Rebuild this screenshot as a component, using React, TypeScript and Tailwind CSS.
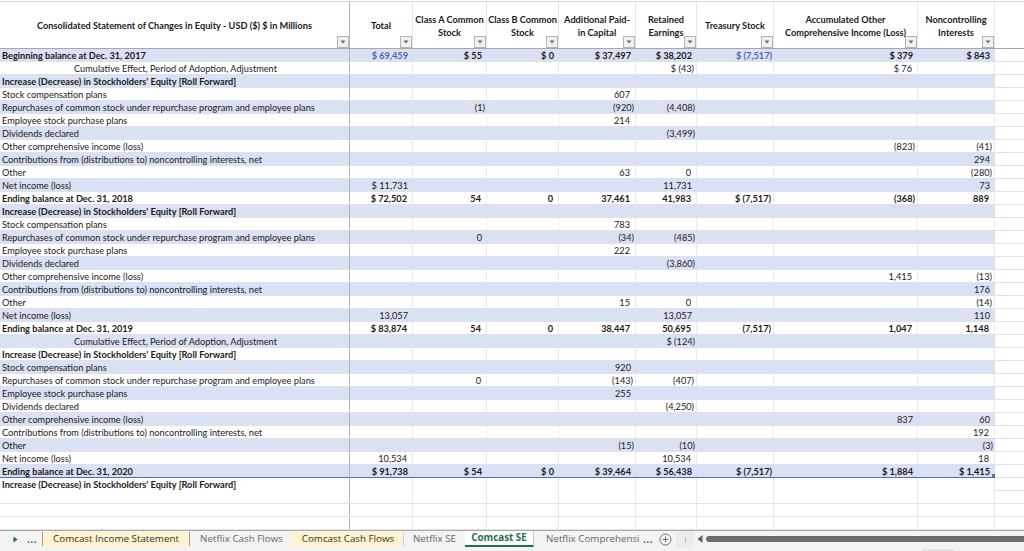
import React from 'react';

type RowData = { label: string; bold?: boolean; center?: boolean; vals?: string[] };

const INCREASE = "Increase (Decrease) in Stockholders' Equity [Roll Forward]";
const CUMULATIVE = 'Cumulative Effect, Period of Adoption, Adjustment';
const STOCK = 'Stock compensation plans';
const REPURCHASES = 'Repurchases of common stock under repurchase program and employee plans';
const EMPLOYEE = 'Employee stock purchase plans';
const DIVIDENDS = 'Dividends declared';
const OCI = 'Other comprehensive income (loss)';
const CONTRIBUTIONS = 'Contributions from (distributions to) noncontrolling interests, net';

// total, class a, class b, apic, retained, treasury, aoci, nci
const ROWS: RowData[] = [
  { label: 'Beginning balance at Dec. 31, 2017', bold: true, vals: ['$ 69,459', '$ 55', '$ 0', '$ 37,497', '$ 38,202', '$ (7,517)', '$ 379', '$ 843'] },
  { label: CUMULATIVE, center: true, vals: ['', '', '', '', '$ (43)', '', '$ 76', ''] },
  { label: INCREASE, bold: true },
  { label: STOCK, vals: ['', '', '', '607', '', '', '', ''] },
  { label: REPURCHASES, vals: ['', '(1)', '', '(920)', '(4,408)', '', '', ''] },
  { label: EMPLOYEE, vals: ['', '', '', '214', '', '', '', ''] },
  { label: DIVIDENDS, vals: ['', '', '', '', '(3,499)', '', '', ''] },
  { label: OCI, vals: ['', '', '', '', '', '', '(823)', '(41)'] },
  { label: CONTRIBUTIONS, vals: ['', '', '', '', '', '', '', '294'] },
  { label: 'Other', vals: ['', '', '', '63', '0', '', '', '(280)'] },
  { label: 'Net income (loss)', vals: ['$ 11,731', '', '', '', '11,731', '', '', '73'] },
  { label: 'Ending balance at Dec. 31, 2018', bold: true, vals: ['$ 72,502', '54', '0', '37,461', '41,983', '$ (7,517)', '(368)', '889'] },
  { label: INCREASE, bold: true },
  { label: STOCK, vals: ['', '', '', '783', '', '', '', ''] },
  { label: REPURCHASES, vals: ['', '0', '', '(34)', '(485)', '', '', ''] },
  { label: EMPLOYEE, vals: ['', '', '', '222', '', '', '', ''] },
  { label: DIVIDENDS, vals: ['', '', '', '', '(3,860)', '', '', ''] },
  { label: OCI, vals: ['', '', '', '', '', '', '1,415', '(13)'] },
  { label: CONTRIBUTIONS, vals: ['', '', '', '', '', '', '', '176'] },
  { label: 'Other', vals: ['', '', '', '15', '0', '', '', '(14)'] },
  { label: 'Net income (loss)', vals: ['13,057', '', '', '', '13,057', '', '', '110'] },
  { label: 'Ending balance at Dec. 31, 2019', bold: true, vals: ['$ 83,874', '54', '0', '38,447', '50,695', '(7,517)', '1,047', '1,148'] },
  { label: CUMULATIVE, center: true, vals: ['', '', '', '', '$ (124)', '', '', ''] },
  { label: INCREASE, bold: true },
  { label: STOCK, vals: ['', '', '', '920', '', '', '', ''] },
  { label: REPURCHASES, vals: ['', '0', '', '(143)', '(407)', '', '', ''] },
  { label: EMPLOYEE, vals: ['', '', '', '255', '', '', '', ''] },
  { label: DIVIDENDS, vals: ['', '', '', '', '(4,250)', '', '', ''] },
  { label: OCI, vals: ['', '', '', '', '', '', '837', '60'] },
  { label: CONTRIBUTIONS, vals: ['', '', '', '', '', '', '', '192'] },
  { label: 'Other', vals: ['', '', '', '(15)', '(10)', '', '', '(3)'] },
  { label: 'Net income (loss)', vals: ['10,534', '', '', '', '10,534', '', '', '18'] },
  { label: 'Ending balance at Dec. 31, 2020', bold: true, vals: ['$ 91,738', '$ 54', '$ 0', '$ 39,464', '$ 56,438', '$ (7,517)', '$ 1,884', '$ 1,415'] },
  { label: INCREASE, bold: true },
];

const HEADERS: string[][] = [
  ['Total'],
  ['Class A Common', 'Stock'],
  ['Class B Common', 'Stock'],
  ['Additional Paid-', 'in Capital'],
  ['Retained', 'Earnings'],
  ['Treasury Stock'],
  ['Accumulated Other', 'Comprehensive Income (Loss)'],
  ['Noncontrolling', 'Interests'],
];

const COLS = 'grid grid-cols-[350px_63px_74px_72px_77px_61px_77px_144px_77px]';
const FONT = "font-['Lato','Liberation_Sans',sans-serif]";

const FilterButton = () => (
  <div className="absolute right-0 bottom-0 flex h-3 w-3 items-center justify-center border border-[#b5b5b5] bg-[#f0f0f0]">
    <svg width="6" height="4" viewBox="0 0 6 4">
      <path d="M0.5 0.5h5L3 3.5z" fill="#6a6a6a" />
    </svg>
  </div>
);

const HeaderRow = () => (
  <div className="mt-px flex h-[48px] shrink-0 border-t border-b border-t-[#d8d8d8] border-b-[#a8a8a8]">
    <div className={`${COLS} w-[995px] shrink-0`}>
      <div className="relative flex items-center justify-center border-r border-[#b4b4b4] pt-px text-[9.2px] leading-[13px] font-bold text-[#1a1a1a]">
        Consolidated Statement of Changes in Equity - USD ($) $ in Millions
        <FilterButton />
      </div>
      {HEADERS.map((lines, i) => (
        <div key={i} className="relative flex flex-col items-center justify-center whitespace-nowrap border-r border-[#e6e6e6] pt-px text-center text-[9.2px] leading-[13px] font-bold text-[#1a1a1a]">
          {lines.map((l) => (
            <span key={l}>{l}</span>
          ))}
          <FilterButton />
        </div>
      ))}
    </div>
    <div className="flex-1" />
  </div>
);

const Row = ({ row, index }: { row: RowData; index: number }) => {
  const shaded = index % 2 === 0;
  const last = index === 32;
  const vals = row.vals ?? ['', '', '', '', '', '', '', ''];
  return (
    <div className="flex h-[13px] shrink-0">
      <div
        className={`${COLS} relative w-[995px] shrink-0 ${shaded ? 'bg-[#d9e1f2]' : 'bg-white'} ${
          shaded && index > 0 ? 'shadow-[0_-1px_0_#d9e1f2]' : ''
        } ${last ? 'border-b border-[#4472c4]' : ''}`}
      >
        <div
          className={`overflow-hidden whitespace-nowrap border-r border-[#b4b4b4] pl-[2px] text-[9.2px] leading-[13px] text-[#1a1a1a] ${
            row.bold ? 'font-bold' : ''
          } ${row.center ? 'text-center' : ''}`}
        >
          {row.label}
        </div>
        {vals.map((v, i) => (
          <div
            key={i}
            className={`whitespace-nowrap text-right text-[9.2px] leading-[13px] ${
              v.endsWith(')') ? 'pr-[2px]' : 'pr-[5px]'
            } ${row.bold ? 'font-bold' : ''} ${
              index === 0 && (i === 0 || i === 5) ? 'text-[#4a67ad]' : 'text-[#1a1a1a]'
            } ${shaded ? '' : 'border-r border-[#e8e8e8]'}`}
          >
            {v}
          </div>
        ))}
        {last && <div className="absolute right-0 bottom-0 h-[3px] w-[3px] bg-[#4472c4]" />}
      </div>
      <div className="flex-1 border-b border-[#e2e2e2]" />
    </div>
  );
};

const BlankRow = () => (
  <div className="flex h-[13px] shrink-0 border-b border-[#e2e2e2]">
    <div className={`${COLS} w-[995px] shrink-0`}>
      <div className="border-r border-[#b4b4b4]" />
      {HEADERS.map((_, i) => (
        <div key={i} className="border-r border-[#e8e8e8]" />
      ))}
    </div>
  </div>
);

const TabBar = () => (
  <div className="relative flex h-[21px] shrink-0 items-start border-t border-[#a8a8a8] bg-[#f3f3f3] pt-px font-['Open_Sans',sans-serif] text-[9.8px] leading-[14px]">
    <div className="flex h-[14px] w-[43px] shrink-0 items-center border-r border-[#9a9a9a]">
      <svg className="ml-[13px]" width="5" height="7" viewBox="0 0 5 7">
        <path d="M0.5 0.5L4.5 3.5L0.5 6.5z" fill="#217346" />
      </svg>
      <span className="ml-[9px] text-[10px] font-bold tracking-[0.5px] text-[#217346]">...</span>
    </div>
    <div className="flex h-[14px] w-[146px] shrink-0 items-center justify-center bg-[#fff2cc] text-[#333]">Comcast Income Statement</div>
    <div className="h-[14px] w-px shrink-0 bg-[#9a9a9a]" />
    <div className="flex h-[14px] w-[103px] shrink-0 items-center justify-center text-[#666]">Netflix Cash Flows</div>
    <div className="flex h-[14px] w-[110px] shrink-0 items-center justify-center bg-[#fff2cc] text-[#333]">Comcast Cash Flows</div>
    <div className="h-[14px] w-px shrink-0 bg-[#d0d0d0]" />
    <div className="flex h-[14px] w-[61px] shrink-0 items-center justify-center text-[#666]">Netflix SE</div>
    <div className="-mt-px flex h-[16px] w-[69px] shrink-0 items-center justify-center border-r border-b-2 border-r-[#c8c8c8] border-b-[#217346] bg-white font-bold text-[#217346]">Comcast SE</div>
    <div className="flex h-[14px] w-[107px] shrink-0 items-center pl-[12px] whitespace-nowrap text-[#666]">Netflix Comprehensi</div>
    <span className="ml-[2px] text-[10px] font-bold tracking-[0.5px] text-[#217346]">...</span>
    <svg className="mt-[1px] ml-[6px]" width="13" height="13" viewBox="0 0 13 13" fill="none" stroke="#707070">
      <circle cx="6.5" cy="6.5" r="5.5" />
      <path d="M6.5 3.5v6M3.5 6.5h6" />
    </svg>
    <div className="-mt-px ml-[4px] flex h-[17px] w-[18px] shrink-0 flex-col items-center justify-center gap-px bg-[#ececec]">
      <div className="h-px w-px bg-[#8a8a8a]" />
      <div className="h-px w-px bg-[#8a8a8a]" />
      <div className="h-px w-px bg-[#8a8a8a]" />
    </div>
    <svg className="mt-[3px] ml-[3px]" width="6" height="8" viewBox="0 0 6 8">
      <path d="M5.5 0L0.5 4L5.5 8z" fill="#606060" />
    </svg>
    <div className="mt-[4px] ml-[3px] h-[6px] flex-1 rounded-l-[3px] bg-[#6e6e6e]" />
    <div className="absolute right-[70px] bottom-0 h-[2px] w-[32px] bg-[#e2e2e2]" />
  </div>
);

export default function App() {
  return (
    <div className={`flex h-[551px] w-[1024px] flex-col overflow-hidden bg-white ${FONT}`}>
      <HeaderRow />
      {ROWS.map((row, i) => (
        <Row key={i} row={row} index={i} />
      ))}
      <BlankRow />
      <BlankRow />
      <BlankRow />
      <TabBar />
    </div>
  );
}
